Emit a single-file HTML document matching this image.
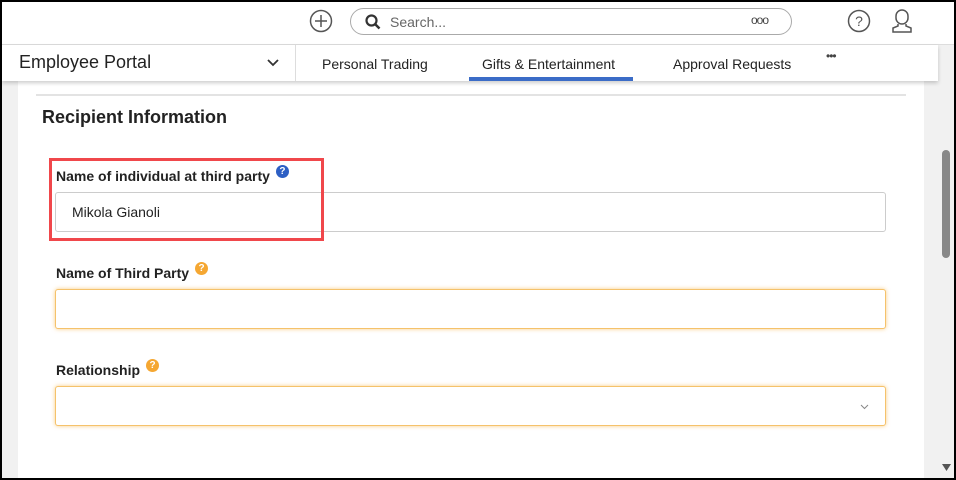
<!DOCTYPE html>
<html><head><style>
*{box-sizing:border-box;margin:0;padding:0}
body{width:956px;height:480px;overflow:hidden;font-family:"Liberation Sans",sans-serif;background:#000;position:relative}
.frame{position:absolute;left:2px;top:2px;width:952px;height:476px;background:#f1f1f1;overflow:hidden}
.top{position:absolute;left:0;top:0;width:952px;height:43px;background:#fff;border-bottom:1px solid #ddd}
.nav{position:absolute;left:0;top:43px;width:936px;height:36px;background:#fff;box-shadow:0 2px 4px rgba(0,0,0,.2);z-index:2}
.card{position:absolute;left:16px;top:79px;width:906px;height:400px;background:#fff}
.sb{position:absolute;left:936px;top:43px;width:16px;height:433px;background:#f1f1f1}
.thumb{position:absolute;left:940px;top:148px;width:8px;height:108px;background:#888;border-radius:4px}
.lbl{position:absolute;left:54px;font-size:14px;font-weight:bold;color:#222}
.q{display:inline-block;width:13px;height:13px;border-radius:50%;color:#fff;font-size:10px;text-align:center;line-height:13px;vertical-align:top;margin-left:6px;margin-top:-3px}
.in{position:absolute;left:53px;width:831px;height:40px;background:#fff;border:1px solid #ccc;border-radius:3px}
.or{border-color:#f5c26b;box-shadow:0 0 4px rgba(245,170,50,.6)}
</style></head><body><div class="frame">
<div class="top">
<svg style="position:absolute;left:307px;top:7px" width="24" height="24"><circle cx="12" cy="12" r="10.5" fill="none" stroke="#555" stroke-width="1.5"/><path d="M12 6v12M6 12h12" stroke="#555" stroke-width="1.5"/></svg>
<div style="position:absolute;left:348px;top:6px;width:442px;height:27px;border:1px solid #aaa;border-radius:14px">
<svg style="position:absolute;left:14px;top:5px" width="16" height="16"><circle cx="6.5" cy="6.5" r="5" fill="none" stroke="#333" stroke-width="2.2"/><path d="M10 10l4.5 4.5" stroke="#333" stroke-width="2.5"/></svg>
<span style="position:absolute;left:39px;top:5px;font-size:14px;color:#666">Search...</span>
<span style="position:absolute;left:400px;top:4px;font-size:12px;color:#444;letter-spacing:-1px">ooo</span></div>
<svg style="position:absolute;left:845px;top:7px" width="24" height="24"><circle cx="12" cy="12" r="10.5" fill="none" stroke="#555" stroke-width="1.5"/><text x="12" y="17" font-size="14" text-anchor="middle" fill="#555" font-family="Liberation Sans">?</text></svg>
<svg style="position:absolute;left:887px;top:6px" width="26" height="26"><path d="M13 2a6 6 0 0 1 6 6v2a6 6 0 0 1-12 0v-2a6 6 0 0 1 6-6z" fill="none" stroke="#555" stroke-width="1.5"/><path d="M9 16v2l-5 2v4h18v-4l-5-2v-2" fill="none" stroke="#555" stroke-width="1.5"/></svg>
</div>
<div class="nav">
<span style="position:absolute;left:17px;top:7px;font-size:18px;color:#222">Employee Portal</span>
<svg style="position:absolute;left:265px;top:14px" width="12" height="8"><path d="M1 1l5 5 5-5" fill="none" stroke="#333" stroke-width="1.8"/></svg>
<div style="position:absolute;left:293px;top:0;width:1px;height:36px;background:#ddd"></div>
<span style="position:absolute;left:320px;top:11px;font-size:14px;color:#222">Personal Trading</span>
<span style="position:absolute;left:480px;top:11px;font-size:14px;color:#222">Gifts &amp; Entertainment</span>
<div style="position:absolute;left:467px;top:32px;width:164px;height:4px;background:#3b6cc7"></div>
<span style="position:absolute;left:671px;top:11px;font-size:14px;color:#222">Approval Requests</span>
<span style="position:absolute;left:824px;top:4px;font-size:12px;color:#444;letter-spacing:-1px">•••</span>
</div>
<div class="card"></div>
<div style="position:absolute;left:34px;top:92px;width:870px;height:2px;background:#e3e3e3"></div>
<div style="position:absolute;left:40px;top:105px;font-size:18px;font-weight:bold;color:#222">Recipient Information</div>
<div class="lbl" style="top:166px">Name of individual at third party<span class="q" style="background:#2d5fc4">?</span></div>
<div class="in" style="top:190px"><span style="position:absolute;left:16px;top:11px;font-size:14px;color:#222">Mikola Gianoli</span></div>
<div style="position:absolute;left:47px;top:156px;width:275px;height:83px;border:3px solid #f0474b"></div>
<div class="lbl" style="top:263px">Name of Third Party<span class="q" style="background:#f5a732">?</span></div>
<div class="in or" style="top:287px"></div>
<div class="lbl" style="top:360px">Relationship<span class="q" style="background:#f5a732">?</span></div>
<div class="in or" style="top:384px"><svg style="position:absolute;left:804px;top:17px" width="9" height="6"><path d="M1 1l3.5 3.5L8 1" fill="none" stroke="#888"/></svg></div>
<div class="sb"></div><div class="thumb"></div>
<svg style="position:absolute;left:940px;top:462px" width="9" height="7"><path d="M0 0h9l-4.5 7z" fill="#555"/></svg>
</div></body></html>
